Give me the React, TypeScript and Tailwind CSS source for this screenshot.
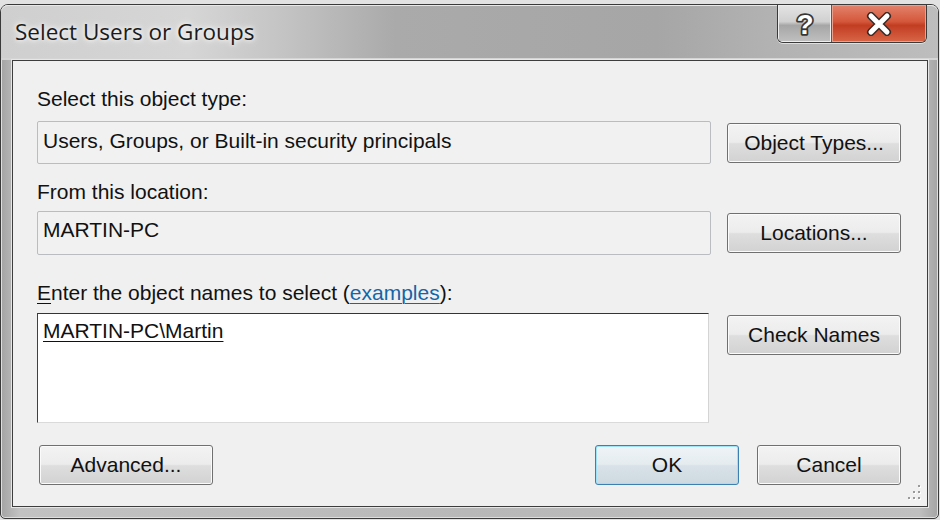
import React from "react";

const body = "font-['Liberation_Sans',Arial,sans-serif]";

function Btn({
  children,
  className = "",
  def = false,
}: {
  children: React.ReactNode;
  className?: string;
  def?: boolean;
}) {
  const look = def
    ? "border-[#3c7fb1] bg-[linear-gradient(#eef3f6_0%,#e5ecf0_48%,#d8e2e8_52%,#cdd9e0_100%)] shadow-[inset_0_0_0_1px_#9fe2f7]"
    : "border-[#707070] bg-[linear-gradient(#f3f3f3_0%,#ececec_48%,#dedede_52%,#d2d2d2_100%)] shadow-[inset_0_0_0_1px_#fbfbfb]";
  return (
    <div
      className={`flex h-[40px] items-center justify-center rounded-[3px] border text-[21px] leading-[24px] text-[#111] ${look} ${className}`}
    >
      {children}
    </div>
  );
}

export default function App() {
  return (
    <div className={`h-[520px] w-[940px] overflow-hidden bg-[#e2e2e2] pt-[4px] ${body}`}>
      {/* window */}
      <div className="flex h-[515px] w-[939px] flex-col rounded-t-[8px] rounded-b-[5px] border border-[#3a3a3a] bg-[linear-gradient(90deg,#a4a4a4_0%,#c2c2c2_2%,#b8b8b8_50%,#c0c0c0_98%,#a4a4a4_100%)] shadow-[inset_0_0_0_1px_#dedede]">
        {/* title bar */}
        <div className="flex h-[55px] items-start rounded-t-[7px] bg-[linear-gradient(90deg,#cfcfcf_0%,#d6d6d6_20%,#c4c4c4_30%,#aaaaaa_42%,#a6a6a6_70%,#b2b2b2_82%,#bdbdbd_100%)] shadow-[inset_0_1px_0_#e8e8e8,inset_0_-2px_0_#d4d4d4]">
          <div className="pl-[14px] pt-[12px] font-['Open_Sans','Noto_Sans',sans-serif] text-[22.5px] leading-[30px] text-[#1b1b1b] [text-shadow:0_0_8px_#ffffff,0_0_4px_#ffffff]">
            Select Users or Groups
          </div>
          <div className="ml-auto mr-[11px] flex h-[38px] overflow-hidden rounded-b-[6px] border border-t-0 border-[#3a3a3a] shadow-[0_1px_0_#e0e0e0]">
            <div className="flex w-[54px] items-center justify-center border-r border-[#5a5a5a] bg-[linear-gradient(#e4e4e4_0%,#d0d0d0_45%,#a6a6a6_55%,#c0c0c0_100%)] shadow-[inset_0_0_0_1px_#eeeeee]">
              <svg width="24" height="30" viewBox="0 0 24 30">
                <text
                  x="12"
                  y="25"
                  textAnchor="middle"
                  fontFamily="Liberation Sans, Arial, sans-serif"
                  fontWeight="bold"
                  fontSize="28"
                  fill="#ffffff"
                  stroke="#363636"
                  strokeWidth="3.5"
                  strokeLinejoin="round"
                  paintOrder="stroke"
                >
                  ?
                </text>
              </svg>
            </div>
            <div className="flex w-[94px] items-center justify-center bg-[linear-gradient(#e2836c_0%,#d4573b_45%,#c23d22_55%,#d86647_100%)] shadow-[inset_0_0_0_1px_#eba08c]">
              <svg width="26" height="24" viewBox="0 0 26 24">
                <path
                  d="M5 4 L21 20 M21 4 L5 20"
                  stroke="#3a2a26"
                  strokeWidth="8"
                  strokeLinecap="round"
                />
                <path
                  d="M5 4 L21 20 M21 4 L5 20"
                  stroke="#ffffff"
                  strokeWidth="5"
                  strokeLinecap="round"
                />
              </svg>
            </div>
          </div>
        </div>

        {/* client area */}
        <div className="relative ml-[11px] h-[447px] w-[916px] border border-[#3d3d3d] bg-[#f0f0f0] pl-[24px] pr-[26px] pt-[26px] shadow-[0_0_0_1px_#e6e6e6] text-[21px] leading-[24px] text-[#111]">
          <div className="h-[24px]">Select this object type:</div>
          <div className="mt-[10px] flex items-center">
            <div className="flex h-[43px] w-[674px] items-center rounded-[2px] border border-[#b9bcc1] bg-[#f1f1f1] pb-[4px] pl-[5px]">
              Users, Groups, or Built-in security principals
            </div>
            <Btn className="ml-[16px] w-[174px]">Object Types...</Btn>
          </div>

          <div className="mt-[16px] h-[24px]">From this location:</div>
          <div className="mt-[7px] flex items-center">
            <div className="flex h-[44px] w-[674px] items-center rounded-[2px] border border-[#b9bcc1] bg-[#f1f1f1] pb-[6px] pl-[5px]">
              MARTIN-PC
            </div>
            <Btn className="ml-[16px] w-[174px]">Locations...</Btn>
          </div>

          <div className="mt-[26px] h-[24px]">
            <span className="underline decoration-1 underline-offset-[3px]">E</span>nter the object
            names to select (
            <span className="text-[#1466a8] underline decoration-1 underline-offset-[3px]">
              examples
            </span>
            ):
          </div>
          <div className="mt-[8px] flex items-start">
            <div className="h-[110px] w-[672px] border border-b-[#dadada] border-l-[#404040] border-r-[#d4d4d4] border-t-[#353535] bg-white pl-[5px] pt-[5px]">
              <span className="underline decoration-1 underline-offset-[3px]">
                MARTIN-PC\Martin
              </span>
            </div>
            <Btn className="ml-[18px] mt-[2px] w-[174px]">Check Names</Btn>
          </div>

          <div className="mt-[22px] flex items-center">
            <Btn className="ml-[2px] w-[174px]">Advanced...</Btn>
            <Btn def className="ml-auto w-[144px]">
              OK
            </Btn>
            <Btn className="ml-[18px] w-[144px]">Cancel</Btn>
          </div>

          {/* resize grip */}
          <svg
            className="absolute bottom-[5px] right-[5px]"
            width="16"
            height="18"
            viewBox="0 0 16 18"
          >
            {[
              [12, 2],
              [12, 8],
              [7, 8],
              [12, 14],
              [7, 14],
              [2, 14],
            ].map(([x, y], i) => (
              <g key={i}>
                <rect x={x + 1} y={y + 1} width="2" height="2" fill="#ffffff" />
                <rect x={x} y={y} width="2" height="2" fill="#9a9a9a" />
              </g>
            ))}
          </svg>
        </div>
      </div>
    </div>
  );
}
